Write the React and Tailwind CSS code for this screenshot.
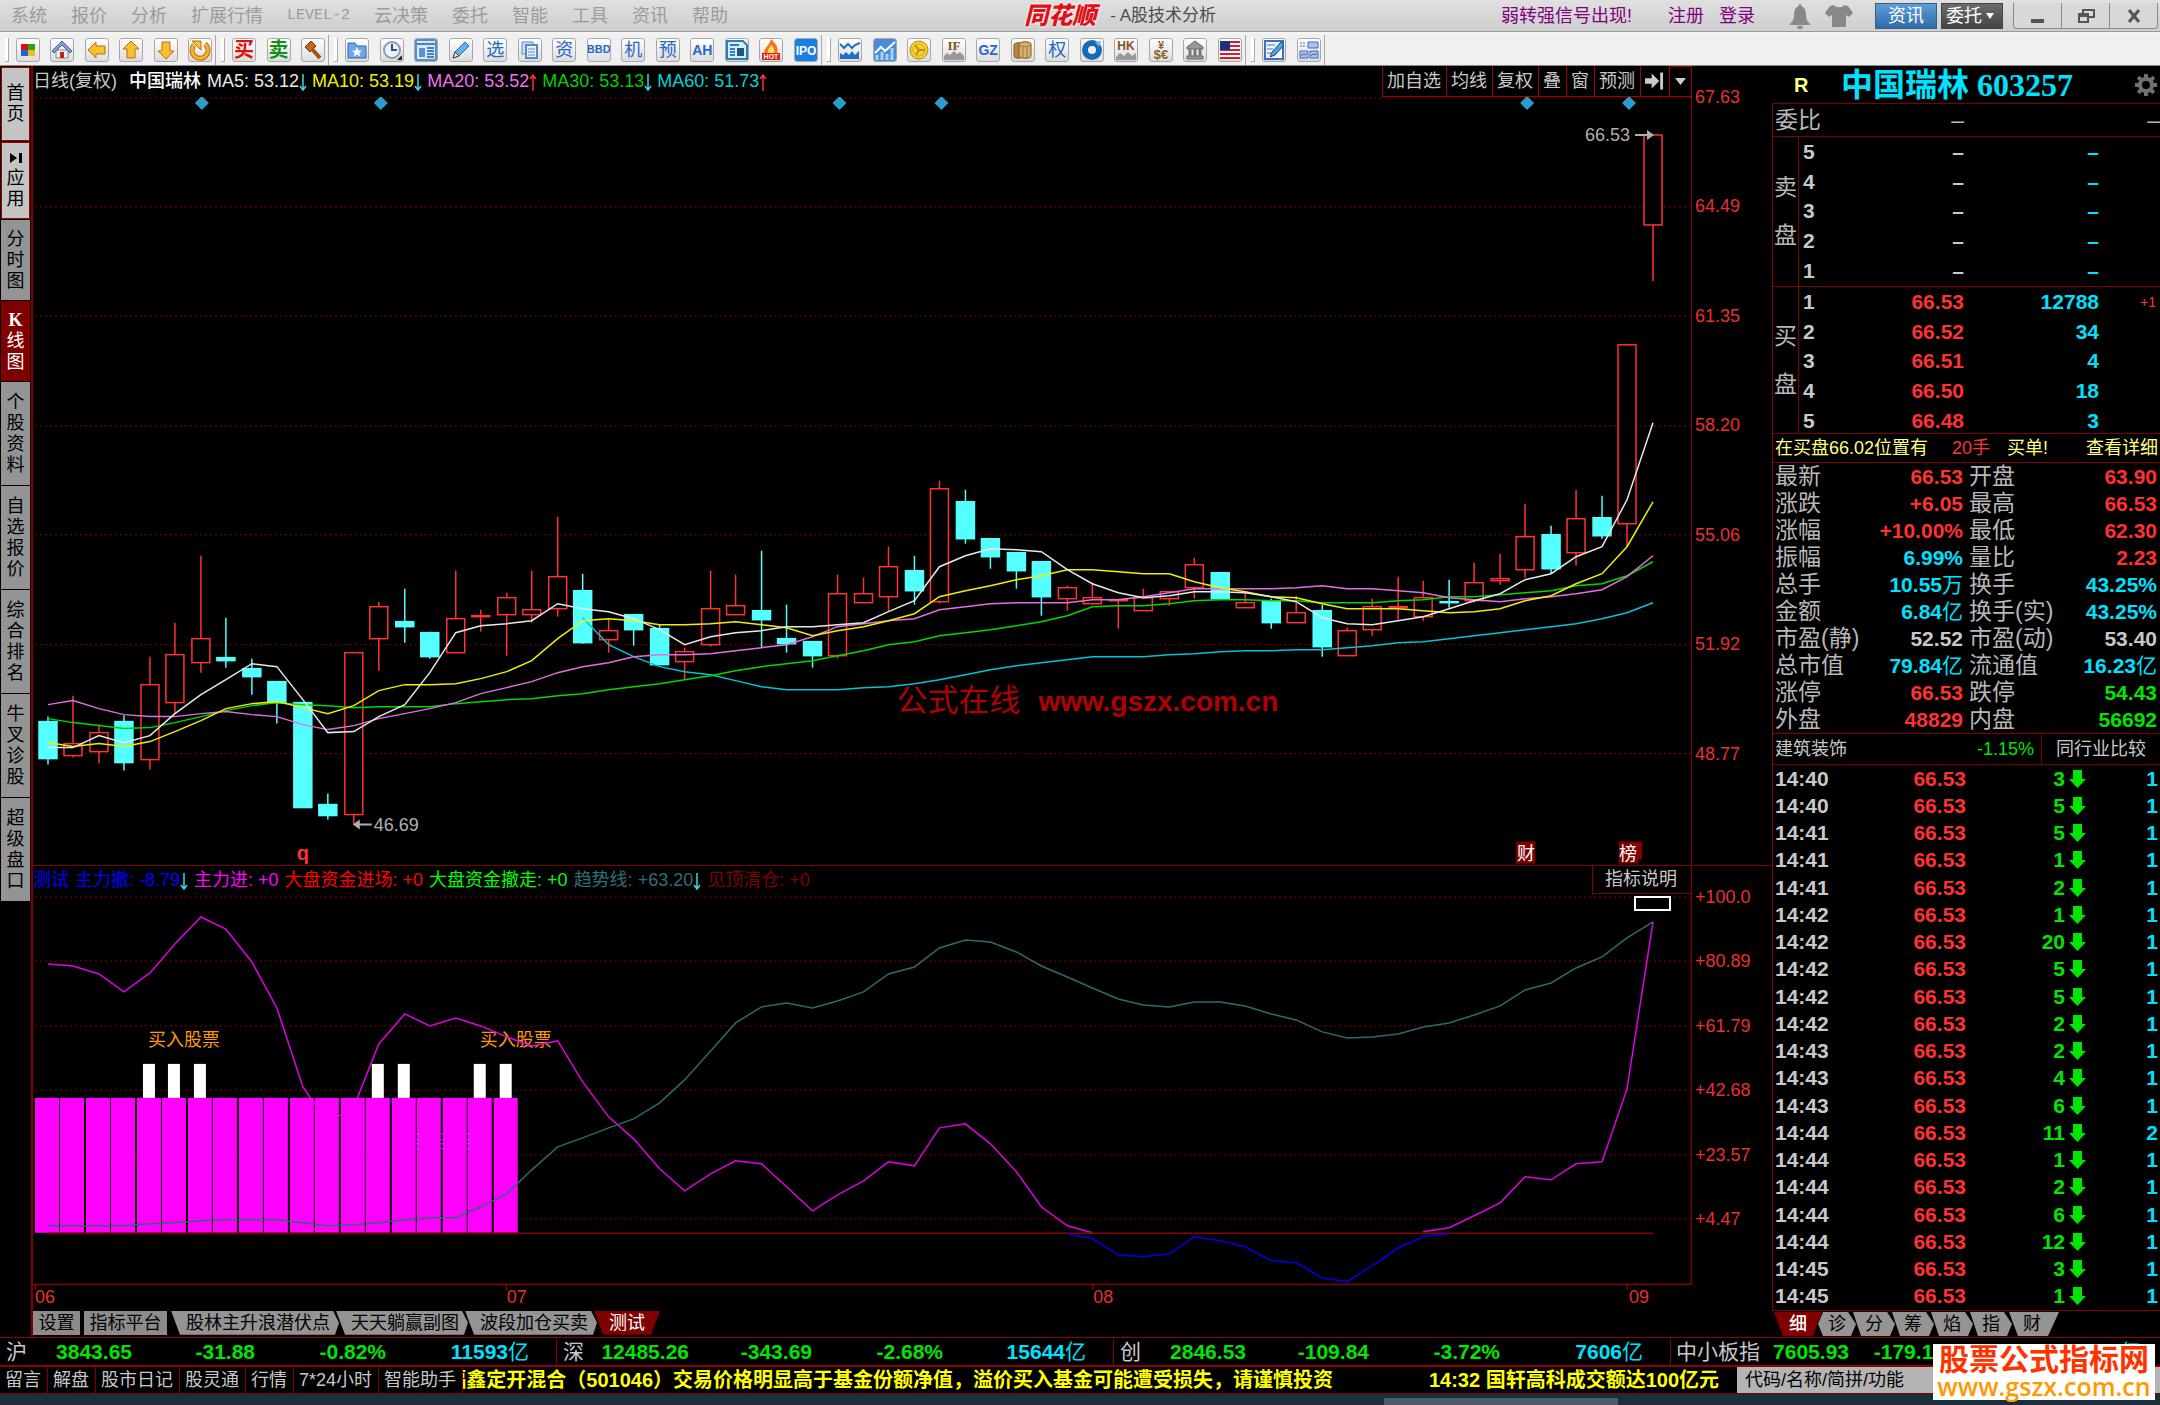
import React from "react";

const STEP = 25.49;
const cx = (i) => Math.round(48 + STEP * i);

// [kind, high, bodyTop, bodyBottom, low]
const candles = [
  ["d", 717, 722, 759, 765], ["u", 696, 744, 756, 758], ["u", 725, 733, 752, 764], ["d", 716, 722, 763, 771],
  ["u", 657, 685, 760, 770], ["u", 623, 655, 703, 714], ["u", 556, 639, 663, 673], ["d", 618, 658, 661, 668],
  ["d", 659, 669, 677, 695], ["d", 682, 682, 703, 724], ["d", 703, 703, 808, 808], ["d", 794, 805, 816, 820],
  ["u", 653, 653, 815, 825], ["u", 602, 607, 639, 671], ["d", 589, 622, 627, 643], ["d", 632, 633, 657, 659],
  ["u", 571, 619, 653, 653], ["u", 610, 616, 617, 632], ["u", 593, 598, 615, 656], ["u", 571, 610, 615, 623],
  ["u", 517, 577, 609, 617], ["d", 574, 591, 643, 644], ["u", 620, 631, 640, 653], ["d", 615, 615, 630, 646],
  ["d", 625, 629, 665, 665], ["u", 648, 652, 662, 680], ["u", 571, 609, 645, 647], ["u", 575, 606, 615, 615],
  ["d", 551, 611, 620, 648], ["d", 605, 639, 644, 653], ["d", 642, 642, 656, 668], ["u", 575, 594, 656, 659],
  ["u", 578, 594, 603, 603], ["u", 547, 567, 597, 612], ["d", 556, 571, 591, 605], ["u", 481, 489, 602, 604],
  ["d", 490, 502, 539, 544], ["d", 538, 539, 557, 569], ["d", 553, 553, 571, 589], ["d", 562, 562, 597, 616],
  ["u", 586, 588, 599, 611], ["u", 584, 598, 604, 605], ["u", 599, 600, 601, 629], ["u", 589, 598, 611, 611],
  ["u", 592, 592, 599, 606], ["u", 558, 565, 588, 599], ["d", 573, 573, 599, 599], ["u", 593, 603, 608, 608],
  ["d", 599, 602, 623, 629], ["u", 596, 613, 623, 623], ["d", 605, 611, 647, 657], ["u", 628, 631, 656, 656],
  ["u", 599, 607, 630, 636], ["u", 577, 607, 608, 620], ["u", 581, 598, 617, 621], ["d", 580, 602, 603, 608],
  ["u", 563, 583, 601, 603], ["u", 554, 579, 581, 585], ["u", 504, 537, 570, 578], ["d", 526, 535, 569, 574],
  ["u", 490, 519, 553, 566], ["d", 496, 518, 536, 539], ["u", 344, 345, 524, 547], ["u", 135, 135, 225, 281],
];

const ma5 = [748, 748, 736, 743, 736, 714, 695, 680, 664, 667, 700, 733, 732, 717, 705, 673, 633, 626, 624, 621, 604, 609, 612, 619, 630, 645, 637, 633, 631, 627, 627, 625, 623, 612, 601, 567, 556, 549, 550, 552, 570, 584, 593, 598, 596, 592, 592, 593, 597, 602, 618, 624, 625, 621, 617, 609, 601, 594, 580, 574, 557, 547, 500, 423];
const ma10 = [743, 747, 744, 747, 742, 732, 721, 709, 704, 702, 708, 714, 706, 691, 685, 685, 684, 679, 672, 661, 639, 621, 619, 621, 625, 625, 624, 622, 625, 628, 636, 631, 627, 621, 614, 597, 591, 586, 580, 576, 570, 570, 572, 574, 574, 582, 588, 592, 597, 598, 604, 609, 609, 609, 611, 613, 612, 609, 601, 596, 584, 574, 547, 502];
const ma20 = [705, 701, 709, 715, 717, 717, 714, 712, 715, 717, 725, 730, 726, 719, 714, 709, 703, 694, 688, 682, 673, 667, 663, 657, 655, 655, 654, 651, 648, 645, 637, 627, 624, 621, 619, 610, 607, 604, 603, 603, 603, 600, 600, 597, 593, 589, 589, 589, 589, 588, 586, 589, 589, 591, 593, 598, 600, 602, 599, 597, 594, 590, 577, 556];
const ma30 = [719, 723, 726, 729, 728, 723, 717, 711, 706, 703, 705, 706, 708, 707, 707, 707, 704, 702, 700, 699, 696, 694, 690, 687, 684, 680, 676, 671, 667, 664, 661, 656, 651, 645, 642, 636, 633, 630, 626, 622, 616, 607, 606, 606, 604, 601, 600, 600, 601, 601, 603, 603, 603, 601, 600, 597, 597, 595, 593, 591, 586, 584, 576, 562];
const ma60 = [618, 645, 657, 667, 672, 675, 681, 687, 690, 690, 690, 688, 687, 684, 680, 675, 670, 666, 663, 660, 657, 657, 657, 655, 654, 652, 651, 651, 650, 650, 648, 646, 643, 642, 639, 636, 633, 630, 627, 624, 619, 613, 603];
const inA = [964, 966, 974, 992, 973, 944, 917, 929, 962, 1008, 1087, 1123, 1107, 1044, 1014, 1026, 1018, 1026, 1037, 1046, 1041, 1082, 1117, 1139, 1169, 1191, 1174, 1161, 1164, 1187, 1211, 1195, 1181, 1162, 1166, 1128, 1124, 1144, 1172, 1207, 1226, 1233];
const inB = [1232, 1228, 1216, 1203, 1177, 1180, 1164, 1162, 1089, 922];
const outflow = [1234, 1239, 1255, 1257, 1254, 1237, 1241, 1247, 1261, 1263, 1278, 1282, 1266, 1248, 1237, 1234];
const trend = [1226, 1226, 1226, 1226, 1224, 1223, 1221, 1220, 1220, 1220, 1223, 1226, 1225, 1223, 1220, 1218, 1218, 1207, 1194, 1170, 1147, 1138, 1128, 1119, 1103, 1080, 1051, 1023, 1007, 1003, 1008, 1001, 992, 974, 967, 948, 940, 942, 952, 966, 977, 988, 999, 1005, 1007, 1002, 1002, 1006, 1014, 1020, 1032, 1038, 1037, 1034, 1027, 1023, 1015, 1006, 990, 983, 968, 957, 938, 922];

const pts = (arr, start = 0) => arr.map((y, i) => `${cx(i + start)},${y}`).join(" ");

function Line({ data, start, color }) {
  return <polyline points={pts(data, start)} fill="none" stroke={color} strokeWidth="1.5" />;
}

function Arrow({ up }) {
  return (
    <svg width="8" height="20" viewBox="0 0 8 20" className="shrink-0" fill="none" stroke={up ? "#ff3232" : "#40d8e8"} strokeWidth="1.5">
      {up ? <path d="M4 19V3M1 7l3-4 3 4" /> : <path d="M4 2v16M1 14l3 4 3-4" />}
    </svg>
  );
}

/* ---------- top bars ---------- */

const menus = ["系统", "报价", "分析", "扩展行情", "LEVEL-2", "云决策", "委托", "智能", "工具", "资讯", "帮助"];

function MenuBar() {
  return (
    <header className="flex h-[34px] items-center border-b-2 border-[#f4f4f4] bg-linear-to-b from-[#e0e0e0] to-[#cdcdcd] shadow-[inset_0_-1px_0_#9a9a9a]">
      <nav className="flex flex-1 items-center gap-[24px] pl-[11px] text-[18px] text-[#9b9b9b]">
        {menus.map((m) => (
          <button key={m} className={m === "LEVEL-2" ? "font-['Liberation_Mono'] text-[15px]" : "whitespace-nowrap"}>{m}</button>
        ))}
      </nav>
      <h1 className="mr-[285px] flex items-center whitespace-nowrap">
        <span className="text-[24px] leading-[28px] font-black text-[#e01018] italic [text-shadow:0_0_3px_#fff,0_0_2px_#fff]">同花顺</span>
        <span className="pl-[14px] text-[17px] text-[#4c4c4c]">- A股技术分析</span>
      </h1>
      <div className="flex items-center text-[18px] whitespace-nowrap text-[#800080]">
        <a href="#signal" className="w-[167px]">弱转强信号出现!</a>
        <a href="#register" className="w-[51px]">注册</a>
        <a href="#login" className="w-[70px]">登录</a>
        <button aria-label="消息" className="mr-[14px]">
          <svg width="22" height="26" viewBox="0 0 22 26" fill="#888">
            <path d="M10 1h2v2c4 1 5 5 5 9 0 5 2 7 4 9v1H1v-1c2-2 4-4 4-9 0-4 1-8 5-9zM8 23h6a3 3 0 0 1-6 0z" />
          </svg>
        </button>
        <button aria-label="换肤" className="mr-[22px]">
          <svg width="28" height="24" viewBox="0 0 28 24" fill="#888">
            <path d="M9 1c1 3 9 3 10 0l4 1 5 7-4 4-3-2v12H7V11l-3 2-4-4 5-7z" />
          </svg>
        </button>
        <button className="h-[26px] w-[62px] border border-[#3a5f8a] bg-linear-to-b from-[#5e9fd8] to-[#2f6aa8] leading-[24px] text-white">资讯</button>
        <button className="ml-1 flex h-[26px] w-[62px] items-center gap-1 border border-[#444] bg-linear-to-b from-[#6b6b6b] to-[#454545] px-1 text-white">
          委托
          <svg width="8" height="6" viewBox="0 0 8 6" fill="#fff"><path d="M0 0h8L4 6z" /></svg>
        </button>
        <div className="mr-[2px] ml-[10px] flex h-[26px] w-[145px] rounded-b border border-t-0 border-[#8a8a8a] bg-[#d8d8d8]">
          <button aria-label="最小化" className="flex flex-1 items-center justify-center">
            <svg width="16" height="16" viewBox="0 0 16 16" fill="#555"><path d="M1 11h13v4H1z" /></svg>
          </button>
          <button aria-label="还原" className="flex flex-1 items-center justify-center border-x border-[#8a8a8a]">
            <svg width="18" height="16" viewBox="0 0 18 16" fill="none" stroke="#555" strokeWidth="2"><path d="M6 5V2h11v7h-5M2 6h9v8H2zM2 8h9" /></svg>
          </button>
          <button aria-label="关闭" className="flex flex-1 items-center justify-center">
            <svg width="16" height="14" viewBox="0 0 16 14" fill="none" stroke="#555" strokeWidth="3"><path d="M3 1l10 12M13 1L3 13" /></svg>
          </button>
        </div>
      </div>
    </header>
  );
}

function Tool({ name, children, text, cls }) {
  return (
    <button aria-label={name} title={name} className="flex h-[24px] w-[24px] items-center justify-center overflow-hidden rounded-[3px] border border-[#a8a8a8] bg-linear-to-b from-white to-[#dcdcdc]">
      {text ? <span className={cls}>{text}</span> : <svg width="22" height="22" viewBox="0 0 22 22">{children}</svg>}
    </button>
  );
}

const blueText = "text-[18px] leading-none text-[#2468c8]";
const gold = { fill: "#fbc030", stroke: "#b5700a", strokeWidth: 1 };

function ToolGroup({ children, width }) {
  return (
    <div className={"flex items-center border-r border-[#a8a8a8] py-[3px] pr-[3px]"}>
      <span className="mr-[7px] ml-[5px] h-[24px] w-[4px] border-r border-b border-[#aaa] bg-white" />
      <div className={"flex justify-between " + width}>{children}</div>
    </div>
  );
}

function Toolbar() {
  return (
    <div className="flex h-[32px] items-center border-b border-[#8a8a8a] bg-[#f0f0f0]">
      <ToolGroup width="w-[196px]">
        <Tool name="主页面"><path fill="#d81010" d="M4 5h7v6H4z" /><path fill="#30a020" d="M11 5h7v6h-7z" /><path fill="#2060d0" d="M4 11h7v6H4z" /><path fill="#f0c010" d="M11 11h7v6h-7z" /></Tool>
        <Tool name="首页"><path d="M5 11h12v8H5z" fill="#eee" stroke="#888" /><path d="M11 2L1 12l2 2 8-8 8 8 2-2z" fill="#7f9fe0" stroke="#4060a0" /><path d="M9 13h4v6H9z" fill="#c02020" /></Tool>
        <Tool name="后退"><path d="M2 11l8-8v4h9v8h-9v4z" {...gold} /></Tool>
        <Tool name="上翻"><path d="M11 2l8 8h-4v9H7v-9H3z" {...gold} /></Tool>
        <Tool name="下翻"><path d="M11 20l8-8h-4V3H7v9H3z" {...gold} /></Tool>
        <Tool name="刷新"><path d="M5 6a8 8 0 1 0 11-1" fill="none" stroke="#b5700a" strokeWidth="5" /><path d="M5 6a8 8 0 1 0 11-1" fill="none" stroke="#fbb030" strokeWidth="3" /><path d="M3 2h9v9z" {...gold} /></Tool>
      </ToolGroup>
      <ToolGroup width="w-[93px]">
        <Tool name="买入" text="买" cls="text-[20px] leading-none font-bold text-[#e01010]" />
        <Tool name="卖出" text="卖" cls="text-[20px] leading-none font-bold text-[#109010]" />
        <Tool name="拍卖"><path d="M3 8l6-6 5 5-6 6z" fill="#c06820" stroke="#703808" /><path d="M10 10l8 9" stroke="#a05018" strokeWidth="4" /></Tool>
      </ToolGroup>
      <ToolGroup width="w-[473px]">
        <Tool name="自选"><path d="M2 4h7l2 3h9v12H2z" fill="#6fa8e8" stroke="#3068a8" /><path d="M11 8l1.500 3.500 3.500.3-2.700 2.200 1 3.500-3.300-2-3.300 2 1-3.500L6 11.800l3.500-.3z" fill="#fff" /></Tool>
        <Tool name="历史"><circle cx="11" cy="11" r="8" fill="#eef3fa" stroke="#8a9ab0" strokeWidth="2" /><path d="M11 5v6h5" stroke="#2050a0" strokeWidth="2" fill="none" /><path d="M21 16v5h-5z" fill="#222" /></Tool>
        <Tool name="版面"><path d="M1 1h20v20H1z" fill="#d8e8fa" stroke="#5a8cd0" strokeWidth="2" /><path d="M2 5h18M12 9h7M12 12h7M12 15h7M12 18h7" stroke="#4a80c8" strokeWidth="2" /><path d="M4 9h6v9H4z" fill="#5a90d8" /></Tool>
        <Tool name="画线"><path d="M3 19l2-6L15 3l4 4L9 17z" fill="#68b0f0" stroke="#2868a8" /><path d="M3 19l2-6 4 4z" fill="#f5e0b0" stroke="#444" /></Tool>
        <Tool name="选股" text="选" cls={blueText} />
        <Tool name="多股"><path d="M3 3h11v12H3z" fill="#cfe0f6" stroke="#5a88c8" /><path d="M7 6h11v13H7z" fill="#e8f1fc" stroke="#5a88c8" strokeWidth="2" /><path d="M9 10h7M9 13h7M9 16h7" stroke="#5a88c8" /></Tool>
        <Tool name="资金" text="资" cls={blueText} />
        <Tool name="大单" text="BBD" cls="text-[11px] leading-none font-bold text-[#2468c8]" />
        <Tool name="机构" text="机" cls={blueText} />
        <Tool name="预测" text="预" cls={blueText} />
        <Tool name="AH股" text="AH" cls="text-[14px] leading-none font-bold text-[#2468c8]" />
        <Tool name="新闻"><path d="M1 2h16l4 4v14H1z" fill="#d6ecf8" stroke="#2880b8" strokeWidth="2" /><path d="M4 6h9M4 10h5M4 13h5M4 16h5" stroke="#2880b8" strokeWidth="2" /><path d="M11 9h7v8h-7z" fill="#205880" /></Tool>
        <Tool name="热点"><path d="M11 0c5 5 8 8 6 15H5C2 10 9 8 11 0z" fill="#f87020" /><path d="M11 6c3 3 4 5 3 9H8c-1-4 1-5 3-9z" fill="#ffe060" /><path d="M2 14h18v7H2z" fill="#e02010" /><text x="11" y="20" textAnchor="middle" fontSize="7" fontWeight="700" fill="#fff" fontFamily="Liberation Sans">HOT</text></Tool>
        <Tool name="新股"><path d="M0 0h22v22H0z" fill="#1880e0" /><text x="11" y="16" textAnchor="middle" fontSize="12" fontWeight="700" fill="#fff" fontFamily="Liberation Sans">IPO</text></Tool>
      </ToolGroup>
      <ToolGroup width="w-[404px]">
        <Tool name="大盘"><path d="M1 5l4 4 4-4 4 4 3-3 5-2" fill="none" stroke="#2070c8" strokeWidth="2" /><path d="M1 20v-6l3 2 3-3 3 3 3-4 3 4 4-4v8z" fill="#2070c8" /></Tool>
        <Tool name="走势"><path d="M0 0h22v22H0z" fill="#4a8cd8" /><path d="M1 14l6-6 4 4 10-9" fill="none" stroke="#fff" strokeWidth="2" /><path d="M3 21v-5M8 21v-8M13 21v-6M18 21V9" stroke="#a8d0f8" strokeWidth="3" /></Tool>
        <Tool name="外汇"><circle cx="11" cy="11" r="9" fill="#f8d030" stroke="#b08810" /><circle cx="11" cy="11" r="6" fill="none" stroke="#d8a818" /><path d="M11 11L7 6M11 11h6M11 11l-3 5" stroke="#c09010" strokeWidth="2" /></Tool>
        <Tool name="期指"><path d="M1 21v-4l3-3 3 2 4-4 3 3 3-2 4 4v4z" fill="#999" /><text x="11" y="11" textAnchor="middle" fontSize="13" fontWeight="700" fill="#805020" fontFamily="Liberation Serif">IF</text></Tool>
        <Tool name="国债" text="GZ" cls="text-[14px] leading-none font-bold text-[#2468c8]" />
        <Tool name="商品"><path d="M2 6c0-3 8-3 8 0v11c0 3-8 3-8 0z" fill="#b88840" stroke="#805820" /><path d="M7 5c0-3 12-3 12 0v12c0 3-12 3-12 0z" fill="#d8b070" stroke="#805820" /><path d="M7 6c2 2 10 2 12 0M11 8v11M15 8v11" fill="none" stroke="#a07838" /></Tool>
        <Tool name="期权" text="权" cls={blueText} />
        <Tool name="基金"><circle cx="11" cy="11" r="7" fill="none" stroke="#1868b8" strokeWidth="6" /><path d="M14 3l6-1-2 6z" fill="#70b0e8" /></Tool>
        <Tool name="港股"><path d="M1 21v-3l4-4 4 3 4-4 4 4 4-3v7z" fill="#999" /><text x="11" y="11" textAnchor="middle" fontSize="12" fontWeight="700" fill="#805020" fontFamily="Liberation Sans">HK</text></Tool>
        <Tool name="汇率"><text x="11" y="10" textAnchor="middle" fontSize="11" fontWeight="700" fill="#906028" fontFamily="Liberation Sans">¥</text><text x="11" y="20" textAnchor="middle" fontSize="13" fontWeight="700" fill="#906028" fontFamily="Liberation Sans">$€</text></Tool>
        <Tool name="债券"><path d="M11 2L3 8v2h16V8zM3 17h16v3H3z" fill="#999" stroke="#666" /><path d="M6 10v7M11 10v7M16 10v7" stroke="#777" strokeWidth="3" /></Tool>
        <Tool name="美股"><path d="M1 2h20v18H1z" fill="#fff" /><path d="M1 3h20M1 7h20M1 11h20M1 15h20M1 19h20" stroke="#d02030" strokeWidth="2" /><path d="M1 2h10v9H1z" fill="#203080" /></Tool>
      </ToolGroup>
      <ToolGroup width="w-[59px]">
        <Tool name="编辑"><path d="M2 2h18v18H2z" fill="#f0f4fc" stroke="#4070c0" strokeWidth="2" /><path d="M4 6h8M4 10h6M4 14h4" stroke="#4070c0" /><path d="M7 18l2-5 9-10 3 3-9 10z" fill="#50a0e8" stroke="#284878" /></Tool>
        <Tool name="面板"><path d="M10 3h10v6H10zM2 12h8v7H2zM12 12h8v7h-8z" fill="#a8c0ec" stroke="#4868b8" /><path d="M2 4h6M2 7h6" stroke="#4868b8" strokeDasharray="2 1" /><path d="M3 17l2-2 2 1 2-2M13 17l2-2 2 1 2-2" stroke="#4868b8" fill="none" /></Tool>
      </ToolGroup>
    </div>
  );
}

/* ---------- left tabs ---------- */

const sideTabs = [
  ["首页", "h-[74px] border border-[#a00000] bg-[#c4c4c4] text-black"],
  ["应用", "h-[77px] border border-[#a00000] bg-[#c4c4c4] text-black"],
  ["分时图", "h-[80px] bg-[#949494] text-black"],
  ["K线图", "h-[80px] bg-[#800000] text-white"],
  ["个股资料", "h-[103px] bg-[#949494] text-black"],
  ["自选报价", "h-[103px] bg-[#949494] text-black"],
  ["综合排名", "h-[103px] bg-[#949494] text-black"],
  ["牛叉诊股", "h-[103px] bg-[#949494] text-black"],
  ["超级盘口", "h-[103px] bg-[#949494] text-black"],
];

function SideTabs() {
  return (
    <aside className="flex w-[33px] shrink-0 flex-col gap-px border-r-2 border-[#800000] bg-black pt-px pr-px pl-px text-[18px] leading-[21px]">
      {sideTabs.map(([t, cls]) => (
        <button key={t} className={"flex flex-col items-center justify-center " + cls}>
          {t === "应用" && (
            <svg width="12" height="12" viewBox="0 0 12 12" className="mb-1"><path d="M0 1l7 5-7 5zM9 1h3v10H9z" /></svg>
          )}
          {[...t].map((c, i) => (
            <span key={i} className={c === "K" ? "font-['Liberation_Serif'] font-bold" : ""}>{c}</span>
          ))}
        </button>
      ))}
    </aside>
  );
}

/* ---------- charts ---------- */

const mas = [
  ["MA5: 53.12", "text-[#e8e8e8]", false], ["MA10: 53.19", "text-[#f0f000]", false], ["MA20: 53.52", "text-[#f070f0]", true],
  ["MA30: 53.13", "text-[#00d000]", false], ["MA60: 51.73", "text-[#00d0d8]", true],
];

function Candle({ c, i }) {
  const [kind, hi, top, bot, lo] = c;
  const x = cx(i);
  const color = kind === "u" ? "#ff3232" : "#54ffff";
  const h = Math.max(bot - top, 1);
  return (
    <g stroke={color} strokeWidth="1.5">
      {hi < top && <path d={`M${x} ${hi}V${top}`} />}
      {lo > bot && <path d={`M${x} ${bot}V${lo}`} />}
      <rect x={x - 9} y={top} width="18" height={h} fill={kind === "u" ? "#000" : color} />
    </g>
  );
}

const cjk = "Liberation Sans, Noto Sans CJK SC, sans-serif";

function PriceChart() {
  return (
    <svg viewBox="33 97 1660 768" className="block h-auto w-full" fontFamily={cjk} fontSize="18">
      {[98, 207, 316, 426, 535, 645, 754].map((y) => (
        <path key={y} d={`M35 ${y}H1692`} stroke="#8a0000" strokeDasharray="2 3" />
      ))}
      {[202, 381, 840, 942, 1528, 1630].map((x) => (
        <path key={x} d={`M${x - 7} 103l7-7 7 7-7 7z`} fill="#2c9cc8" />
      ))}
      {candles.map((c, i) => <Candle key={i} c={c} i={i} />)}
      <Line data={ma60} start={21} color="#00c4d8" />
      <Line data={ma30} color="#00d800" />
      <Line data={ma20} color="#e070e0" />
      <Line data={ma10} color="#f0f000" />
      <Line data={ma5} color="#e8e8e8" />
      <g fill="#b0b0b0">
        <text x="1586" y="141">66.53</text>
        <path d="M1636 134h12v-4l7 5-7 5v-4h-12z" />
        <text x="374" y="831">46.69</text>
        <path d="M372 824h-12v-4l-7 5 7 5v-4h12z" />
      </g>
      <text x="297" y="860" fontSize="20" fontWeight="700" fill="#ff3232">q</text>
      <path d="M1517 842h19v22h-19zM1620 842h23v18h-4v4h-19z" fill="#800000" />
      <g fill="#fff">
        <text x="1518" y="860">财</text>
        <text x="1620" y="860">榜</text>
      </g>
      <g fill="#b00000">
        <text x="897" y="711" fontSize="31">公式在线</text>
        <text x="1039" y="711" fontSize="28" fontWeight="700">www.gszx.com.cn</text>
      </g>
      <path d="M1692.500 97V865" stroke="#800000" />
    </svg>
  );
}

function FlowChart() {
  const bars = Array.from({ length: 19 }, (_, i) => Math.round(35 + i * 25.49));
  return (
    <svg viewBox="33 894 1660 417" className="block h-auto w-full" fontFamily={cjk} fontSize="18">
      {[897, 961, 1026, 1090, 1155, 1219].map((y) => (
        <path key={y} d={`M35 ${y}H1692`} stroke="#8a0000" strokeDasharray="2 3" />
      ))}
      <g fill="#ff9900">
        <text x="148" y="1046">买入股票</text>
        <text x="480" y="1046">买入股票</text>
      </g>
      <Line data={inA} color="#e000e0" />
      <Line data={inB} start={54} color="#e000e0" />
      {bars.map((x) => <rect key={x} x={x} y="1098" width="24" height="135" fill="#ff00ff" />)}
      {[4, 5, 6, 13, 14, 17, 18].map((i) => <rect key={i} x={cx(i) - 7} y="1064" width="12" height="34" fill="#fff" />)}
      <g stroke="#8060ff">
        {[417, 442, 468].map((x) => <path key={x} d={`M${x - 1} 1134h3M${x - 1} 1140h3M${x - 1} 1144h3M${x - 1} 1149h3`} />)}
      </g>
      <path d="M48 1233.500H1654" stroke="#8a0000" strokeWidth="1.500" />
      <Line data={trend} color="#2c6a6e" />
      <Line data={outflow} start={40} color="#0000e8" />
      <rect x="1636" y="897" width="35" height="13" fill="#000" stroke="#fff" strokeWidth="2" />
      <path d="M33 1284.500H1693M1692.500 894V1284M35.500 1285v5M506.500 1285v5M1093.500 1285v5M1628.500 1285v5" stroke="#800000" fill="none" strokeWidth="1.500" />
      <g fill="#e83030">
        <text x="35" y="1303">06</text>
        <text x="507" y="1303">07</text>
        <text x="1094" y="1303">08</text>
        <text x="1630" y="1303">09</text>
      </g>
    </svg>
  );
}

function Axis({ labels, cls }) {
  return (
    <div className={"flex w-[80px] shrink-0 flex-col justify-between pt-[20px] pl-[3px] text-[18px] leading-[22px] text-[#e83030] " + cls}>
      {labels.map((l) => <span key={l}>{l}</span>)}
    </div>
  );
}

const chartButton = "border-l border-[#a00000] pr-[5px] pl-[4px]";
const flowLegend = [
  ["主力撤: -8.79", "text-[#0000ff]", "down"], ["主力进: +0", "text-[#ff00ff]", null], ["大盘资金进场: +0", "text-[#ff0000]", null],
  ["大盘资金撤走: +0", "text-[#00ff00]", null], ["趋势线: +63.20", "text-[#2f6f72]", "down"], ["见顶清仓: +0", "text-[#800000]", null],
];

const chartTab = "h-[24px] bg-[#949494] pr-[9px] pl-[15px] leading-[24px] [clip-path:polygon(0_0,calc(100%-6px)_0,100%_50%,calc(100%-4px)_100%,9px_100%)]";

function Charts() {
  return (
    <main className="flex min-w-0 flex-1 flex-col">
      <section className="flex border-b border-[#800000]">
        <div className="min-w-0 flex-1">
          <div className="flex h-[31px] items-center text-[18px] whitespace-nowrap">
            <span className="text-[#c8c8c8]">日线(复权)</span>
            <span className="mr-[6px] ml-3 font-medium text-white">中国瑞林</span>
            {mas.map(([t, c, up]) => (
              <span key={t} className={"mr-[5px] flex items-center " + c}>{t}<Arrow up={up} /></span>
            ))}
            <div className="ml-auto flex h-full border-b border-[#a00000] text-[#c8c8c8]">
              <button className={chartButton}>加自选</button>
              <button className={chartButton}>均线</button>
              <button className={chartButton}>复权</button>
              <button className={chartButton}>叠</button>
              <button className={chartButton}>窗</button>
              <button className={chartButton}>预测</button>
              <button aria-label="跳到最新" className={chartButton}>
                <svg width="19" height="18" viewBox="0 0 20 18" fill="#ccc"><path d="M0 6h7V1l8 8-8 8v-5H0zM16 0h3v18h-3z" /></svg>
              </button>
              <button aria-label="更多" className="border border-b-0 border-[#a00000] px-[5px]">
                <svg width="11" height="8" viewBox="0 0 11 8" fill="#ccc"><path d="M0 0h11L5.500 7z" /></svg>
              </button>
            </div>
          </div>
          <PriceChart />
        </div>
        <Axis cls="pb-[100px]" labels={["67.63", "64.49", "61.35", "58.20", "55.06", "51.92", "48.77"]} />
      </section>
      <section className="flex">
        <div className="min-w-0 flex-1">
          <div className="flex h-[28px] items-center gap-[6px] text-[18px] whitespace-nowrap">
            <span className="pt-[2px] text-[#0000ff]">测试</span>
            {flowLegend.map(([t, c, a]) => (
              <span key={t} className={"flex items-center pt-[2px] " + c}>{t}{a && <Arrow />}</span>
            ))}
            <button className="ml-auto h-full border border-t-0 border-[#800000] pr-[14px] pl-[12px] text-[#c8c8c8]">指标说明</button>
          </div>
          <FlowChart />
        </div>
        <Axis cls="pb-[80px]" labels={["+100.0", "+80.89", "+61.79", "+42.68", "+23.57", "+4.47"]} />
      </section>
      <div className="flex h-[25px] items-center text-[18px] whitespace-nowrap text-black">
        <button className="mr-1 h-[24px] w-[47px] bg-[#8c8c8c] leading-[24px]">设置</button>
        <button className="mr-1 h-[24px] w-[83px] bg-[#8c8c8c] leading-[24px]">指标平台</button>
        <button className={chartTab}>股林主升浪潜伏点</button>
        <button className={"-ml-[3px] " + chartTab}>天天躺赢副图</button>
        <button className={"-ml-[3px] " + chartTab}>波段加仓买卖</button>
        <button className="-ml-[3px] h-[24px] bg-[#800000] px-[15px] leading-[24px] text-white [clip-path:polygon(0_0,100%_0,calc(100%-9px)_100%,9px_100%)]">测试</button>
      </div>
    </main>
  );
}

/* ---------- right panel ---------- */

const R = "text-[#ff3232]";
const C = "text-[#00e0ff]";
const W = "text-[#c8c8c8]";
const G = "text-[#00e600]";

const sells = ["5", "4", "3", "2", "1"];
const buys = [["1", "66.53", "12788"], ["2", "66.52", "34"], ["3", "66.51", "4"], ["4", "66.50", "18"], ["5", "66.48", "3"]];
const quotes = [
  ["最新", "66.53", "", R, "开盘", "63.90", "", R],
  ["涨跌", "+6.05", "", R, "最高", "66.53", "", R],
  ["涨幅", "+10.00%", "", R, "最低", "62.30", "", R],
  ["振幅", "6.99%", "", C, "量比", "2.23", "", R],
  ["总手", "10.55", "万", C, "换手", "43.25%", "", C],
  ["金额", "6.84", "亿", C, "换手(实)", "43.25%", "", C],
  ["市盈(静)", "52.52", "", W, "市盈(动)", "53.40", "", W],
  ["总市值", "79.84", "亿", C, "流通值", "16.23", "亿", C],
  ["涨停", "66.53", "", R, "跌停", "54.43", "", G],
  ["外盘", "48829", "", R, "内盘", "56692", "", G],
];
const ticks = [
  ["14:40", 3, 1], ["14:40", 5, 1], ["14:41", 5, 1], ["14:41", 1, 1], ["14:41", 2, 1], ["14:42", 1, 1], ["14:42", 20, 1],
  ["14:42", 5, 1], ["14:42", 5, 1], ["14:42", 2, 1], ["14:43", 2, 1], ["14:43", 4, 1], ["14:43", 6, 1], ["14:44", 11, 2],
  ["14:44", 1, 1], ["14:44", 2, 1], ["14:44", 6, 1], ["14:44", 12, 1], ["14:45", 3, 1], ["14:45", 1, 1],
];

function BookSide({ label, rows, height }) {
  return (
    <div className={"flex items-start border-b border-[#800000] " + height}>
      <div className="flex h-full w-[26px] shrink-0 flex-col items-center justify-center gap-[13px] border-r border-[#800000] text-[23px] leading-[35px] text-[#b8b8b8]">
        {[...label].map((c) => <span key={c}>{c}</span>)}
      </div>
      <table className="h-[149px] flex-1 table-fixed text-[21px] leading-[24px] font-bold">
        <tbody>
          {rows.map(([n, p, v]) => (
            <tr key={n}>
              <td className="w-[40px] p-0 pl-[4px] text-[#c8c8c8]">{n}</td>
              <td className={"w-[125px] p-0 text-right " + (p ? R : W)}>{p || "–"}</td>
              <td className={"w-[135px] p-0 text-right " + C}>{v || "–"}</td>
              <td className={"p-0 pr-[4px] text-right text-[14px] font-normal " + R}>{p && n === "1" ? "+1" : ""}</td>
            </tr>
          ))}
        </tbody>
      </table>
    </div>
  );
}

const panelTab = "h-[24px] w-[42px] bg-[#949494] text-center leading-[24px] [clip-path:polygon(0_0,calc(100%-8px)_0,100%_50%,calc(100%-5px)_100%,8px_100%)]";

function QuotePanel() {
  return (
    <aside className="flex w-[388px] shrink-0 flex-col">
      <div className="flex h-[37px] items-center pl-[22px]">
        <span className="w-[47px] text-[20px] font-bold text-[#ffff80]">R</span>
        <h2 className="font-['Liberation_Serif','Noto_Sans_CJK_SC',serif] text-[32px] leading-[36px] font-bold whitespace-nowrap text-[#00e0ff]">中国瑞林 603257</h2>
        <button aria-label="设置" className="mr-[2px] ml-auto">
          <svg width="24" height="24" viewBox="0 0 24 24" fill="none" stroke="#707070">
            <circle cx="12" cy="12" r="6" strokeWidth="4" />
            <path strokeWidth="4" d="M12 1v4M12 19v4M1 12h4M19 12h4M4.200 4.200l3 3M16.800 16.800l3 3M4.200 19.800l3-3M16.800 7.200l3-3" />
          </svg>
        </button>
      </div>
      <div className="flex flex-1 flex-col border-t border-b border-l border-[#800000]">
        <div className="flex h-[33px] items-center border-b border-[#800000] pl-[2px] text-[23px] text-[#b8b8b8]">
          <span className="w-[50px]">委比</span>
          <span className="w-[139px] text-right">–</span>
          <span className="ml-auto">–</span>
        </div>
        <BookSide label="卖盘" rows={sells.map((n) => [n, "", ""])} height="h-[150px]" />
        <BookSide label="买盘" rows={buys} height="h-[147px]" />
        <div className="flex h-[29px] items-center border-b border-[#800000] pl-[2px] text-[18px] whitespace-nowrap text-[#ffff80]">
          <span className="w-[177px]">在买盘66.02位置有</span>
          <span className="w-[55px] text-[#ff3232]">20手</span>
          <span>买单!</span>
          <a href="#detail" className="ml-auto pr-[2px]">查看详细</a>
        </div>
        <table className="h-[271px] w-full table-fixed border-b border-[#800000] text-[21px] leading-[27px] whitespace-nowrap">
          <tbody>
            {quotes.map(([a, av, au, ac, b, bv, bu, bc]) => (
              <tr key={a} className="h-[27px]">
                <td className="w-[88px] p-0 pl-[2px] text-[23px] text-[#b8b8b8]">{a}</td>
                <td className={"w-[102px] p-0 text-right font-bold " + ac}>{av}<span className="font-normal">{au}</span></td>
                <td className="w-[96px] p-0 pl-[6px] text-[23px] text-[#b8b8b8]">{b}</td>
                <td className={"p-0 pr-[3px] text-right font-bold " + bc}>{bv}<span className="font-normal">{bu}</span></td>
              </tr>
            ))}
          </tbody>
        </table>
        <div className="flex h-[31px] items-stretch border-b border-[#800000] pl-[2px] text-[18px] leading-[30px] whitespace-nowrap">
          <span className="text-[#c8c8c8]">建筑装饰</span>
          <span className="ml-auto pr-[7px] text-[#00e600]">-1.15%</span>
          <button className="w-[119px] border-l border-[#800000] text-[#c8c8c8]">同行业比较</button>
        </div>
        <table className="h-[545px] w-full table-fixed text-[21px] leading-[26px] font-bold">
          <tbody>
            {ticks.map(([t, v, n], i) => (
              <tr key={i}>
                <td className="w-[100px] p-0 pl-[2px] text-[#c8c8c8]">{t}</td>
                <td className={"w-[93px] p-0 text-right " + R}>66.53</td>
                <td className={"w-[99px] p-0 text-right " + G}>{v}</td>
                <td className="p-0 pl-[4px]">
                  <svg width="17" height="18" viewBox="0 0 17 18" fill="#00e600"><path d="M4 0h9v9h4l-8.500 9L0 9h4z" /></svg>
                </td>
                <td className={"w-[60px] p-0 pr-[2px] text-right " + C}>{n}</td>
              </tr>
            ))}
          </tbody>
        </table>
      </div>
      <div className="flex h-[26px] items-center pl-[2px] text-[18px] text-black">
        <button className="h-[24px] w-[48px] bg-[#800000] text-center leading-[24px] font-medium text-white [clip-path:polygon(0_0,100%_0,calc(100%-9px)_100%,9px_100%)]">细</button>
        <button className="-ml-[4px] h-[24px] w-[38px] bg-[#949494] text-center leading-[24px] [clip-path:polygon(5px_0,calc(100%-8px)_0,100%_50%,calc(100%-5px)_100%,5px_100%,0_50%)]">诊</button>
        {["分", "筹", "焰", "指"].map((t) => <button key={t} className={"-ml-[3px] " + panelTab}>{t}</button>)}
        <button className="-ml-[3px] h-[24px] w-[50px] bg-[#949494] pr-[4px] text-center leading-[24px] [clip-path:polygon(0_0,100%_0,calc(100%-11px)_100%,9px_100%)]">财</button>
      </div>
    </aside>
  );
}

/* ---------- bottom bars ---------- */

const indices = [
  ["沪", "3843.65", "-31.88", "-0.82%", "11593"],
  ["深", "12485.26", "-343.69", "-2.68%", "15644"],
  ["创", "2846.53", "-109.84", "-3.72%", "7606"],
];

function IndexBar() {
  return (
    <div className="flex h-[30px] items-center overflow-hidden border-t border-b-2 border-[#900000] text-[21px] leading-[27px] font-bold whitespace-nowrap text-[#00e600]">
      {indices.map(([n, a, b, c, d]) => (
        <div key={n} className="flex h-full w-[557px] shrink-0 items-center border-r border-[#800000] pl-[6px]">
          <span className="w-[24px] font-normal text-[#c8c8c8]">{n}</span>
          <span className="w-[102px] text-right">{a}</span>
          <span className="w-[123px] text-right">{b}</span>
          <span className="w-[131px] text-right">{c}</span>
          <span className={"w-[143px] text-right " + C}>{d}<span className="font-normal">亿</span></span>
        </div>
      ))}
      <div className="flex h-full flex-1 items-center pl-[5px]">
        <span className="w-[97px] font-normal text-[#c8c8c8]">中小板指</span>
        <span className="w-[76px] text-right">7605.93</span>
        <span className="w-[96px] text-right">-179.14</span>
        <span className="w-[96px] text-right">-2.30%</span>
        <span className={"w-[100px] text-right " + C}>1505<span className="font-normal">亿</span></span>
      </div>
    </div>
  );
}

const links = ["留言", "解盘", "股市日记", "股灵通", "行情", "7*24小时", "智能助手"];

function TickerBar() {
  return (
    <div className="flex h-[27px] items-stretch border-b border-[#800000] text-[18px] whitespace-nowrap">
      {links.map((l) => (
        <button key={l} className="border-r border-[#800000] pr-[6px] pl-[5px] text-[#c8c8c8]">{l}</button>
      ))}
      <p className="flex min-w-0 flex-1 items-center justify-between overflow-hidden pr-[18px] text-[20px] font-bold text-[#ffff00]">
        <span className="flex w-[870px] justify-end overflow-hidden">福鑫定开混合（501046）交易价格明显高于基金份额净值，溢价买入基金可能遭受损失，请谨慎投资</span>
        <span>14:32 国轩高科成交额达100亿元</span>
      </p>
      <input aria-label="搜索" placeholder="代码/名称/简拼/功能" className="w-[423px] bg-[#b4b4b4] pl-[8px] text-black placeholder:text-black" />
    </div>
  );
}

export default function App() {
  return (
    <div className="relative flex min-h-screen flex-col overflow-hidden bg-black font-['Liberation_Sans','Noto_Sans_CJK_SC',sans-serif]">
      <MenuBar />
      <Toolbar />
      <div className="flex">
        <SideTabs />
        <Charts />
        <QuotePanel />
      </div>
      <IndexBar />
      <TickerBar />
      <div className="flex flex-1 items-end justify-center bg-[#1c2e3a] pl-[842px]">
        <span className="h-[7px] w-[234px] bg-[#4a5a66]" />
      </div>
      <a href="#gszx" className="absolute right-[5px] bottom-[5px] flex h-[56px] w-[222px] flex-col items-center bg-white whitespace-nowrap">
        <span className="text-[30px] leading-[32px] font-bold text-[#ff3300]">股票公式指标网</span>
        <span className="font-['Open_Sans'] text-[25px] leading-[20px] font-semibold text-[#ff9900]">www.gszx.com.cn</span>
      </a>
    </div>
  );
}
